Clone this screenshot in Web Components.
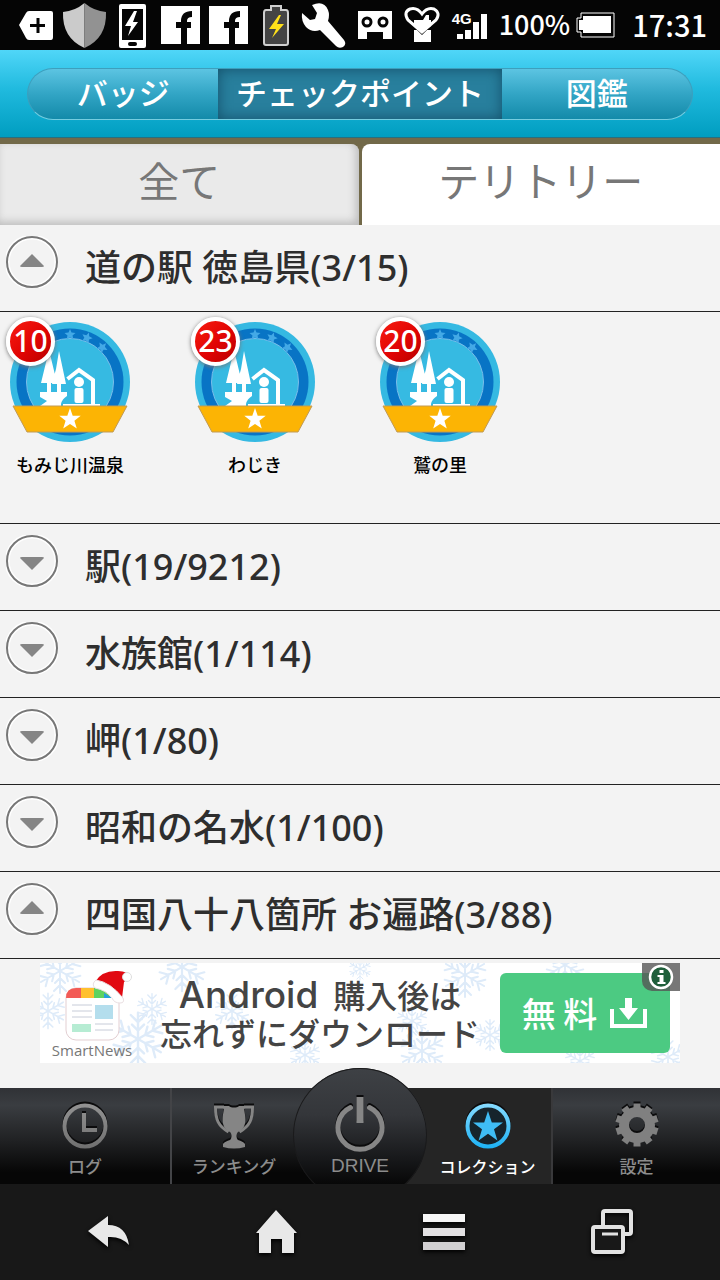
<!DOCTYPE html>
<html lang="ja">
<head>
<meta charset="utf-8">
<meta name="viewport" content="width=device-width, initial-scale=1">
<title>チェックポイント</title>
<style>
  body { margin: 0; background: #f3f3f3; font-family: "Noto Sans CJK JP", "Noto Sans", sans-serif; color: #2e2e2e; }
</style>
</head>
<body>
<app-screen>
  <status-bar slot="top"></status-bar>
  <segment-nav slot="top"></segment-nav>
  <view-tabs slot="top"></view-tabs>

  <list-section open>道の駅 徳島県(3/15)
    <check-badge slot="items" count="10">もみじ川温泉</check-badge>
    <check-badge slot="items" count="23">わじき</check-badge>
    <check-badge slot="items" count="20">鷲の里</check-badge>
  </list-section>
  <list-section>駅(19/9212)</list-section>
  <list-section>水族館(1/114)</list-section>
  <list-section>岬(1/80)</list-section>
  <list-section>昭和の名水(1/100)</list-section>
  <list-section open>四国八十八箇所 お遍路(3/88)</list-section>

  <ad-banner slot="bottom"></ad-banner>
  <tab-bar slot="bottom">
    <tab-item>
      <svg slot="icon" width="48" height="48" viewBox="0 0 48 48" fill="none" stroke="url(#g)" aria-hidden="true">
        <defs><linearGradient id="g" gradientUnits="userSpaceOnUse" x1="0" y1="0" x2="0" y2="48"><stop offset="0" stop-color="#949494"/><stop offset="1" stop-color="#6e6e6e"/></linearGradient></defs>
        <circle cx="24" cy="24" r="20.5" stroke-width="4"/><path d="M23 11v17h13" stroke-width="4"/>
      </svg>ログ
    </tab-item>
    <tab-item>
      <svg slot="icon" width="48" height="48" viewBox="0 0 48 48" fill="#858585" aria-hidden="true">
        <path d="M13 4h6c2 2 8 2 10 0h6v2l-1 1c3 14 1 20-6 23-2 2-2 6 0 8 3 1 6 2 7 4v3q-11 3-22 0v-3c1-2 4-3 7-4 2-2 2-6 0-8-7-3-9-9-6-23l-1-1z"/>
        <path d="M14 5H5.500c0 13 3 19 13 25M34 5h8.500c0 13-3 19-13 25" fill="none" stroke="#858585" stroke-width="3"/>
      </svg>ランキング
    </tab-item>
    <tab-item kind="drive">
      <svg slot="icon" width="52" height="60" viewBox="0 0 52 60" fill="none" stroke="#868686" aria-hidden="true">
        <path d="M16.500 13.500a22 22 0 1 0 19 0" stroke-width="5" stroke-linecap="round"/><path d="M26 3v26" stroke-width="7"/>
      </svg>DRIVE
    </tab-item>
    <tab-item kind="current">
      <svg slot="icon" width="48" height="48" viewBox="0 0 48 48" aria-hidden="true">
        <defs><linearGradient id="b" gradientUnits="userSpaceOnUse" x1="0" y1="0" x2="0" y2="48"><stop offset="0" stop-color="#8adcff"/><stop offset="1" stop-color="#19b1f5"/></linearGradient></defs>
        <circle cx="24" cy="24" r="20.500" fill="#16242c" stroke="url(#b)" stroke-width="4"/>
        <path fill="#3fbdf5" d="M24 9l3.800 11.400h11.200l-9 6.800 3.400 11.300L24 31.700l-9.400 6.800L18 27.200l-9-6.800h11.200z"/>
      </svg>コレクション
    </tab-item>
    <tab-item>
      <svg slot="icon" width="48" height="48" viewBox="0 0 48 48" aria-hidden="true">
        <circle cx="24" cy="23" r="13" fill="none" stroke="#808080" stroke-width="10"/>
        <g id="teeth" fill="none" stroke="#808080" stroke-width="7"><path id="t" d="M24 1.500v6"/><use href="#t" transform="rotate(36 24 23)"/><use href="#t" transform="rotate(72 24 23)"/><use href="#t" transform="rotate(108 24 23)"/><use href="#t" transform="rotate(144 24 23)"/><use href="#t" transform="rotate(180 24 23)"/><use href="#t" transform="rotate(216 24 23)"/><use href="#t" transform="rotate(252 24 23)"/><use href="#t" transform="rotate(288 24 23)"/><use href="#t" transform="rotate(324 24 23)"/></g>
      </svg>設定
    </tab-item>
  </tab-bar>
  <system-nav slot="bottom"></system-nav>
</app-screen>

<script>
const define = (name, html, setup) => {
  const template = document.createElement('template');
  template.innerHTML = html;
  customElements.define(name, class extends HTMLElement {
    constructor() {
      super();
      this.attachShadow({ mode: 'open' }).append(template.content.cloneNode(true));
    }
    connectedCallback() { if (setup) setup(this, this.shadowRoot); }
  });
};

const reset = `*{box-sizing:border-box} button{font:inherit;color:inherit;border:0;padding:0;margin:0;background:none;cursor:pointer} svg{display:block;flex:none}`;

define('app-screen', `
<style>${reset}
  :host { display: flex; flex-direction: column; min-height: 100vh; }
  main { flex: 1; }
</style>
<header><slot name="top"></slot></header>
<main><slot></slot></main>
<footer><slot name="bottom"></slot></footer>`);

define('status-bar', `
<style>${reset}
  :host { display: flex; align-items: center; height: 50px; padding: 0 13px 0 12px; background: #050505; color: #fff; overflow: hidden; }
  .icons { display: flex; }
  .state { display: flex; align-items: center; margin-left: auto; white-space: nowrap; line-height: 48px; }
  .net { display: grid; }
  .net > * { grid-area: 1 / 1; }
  .net span { font-size: 15px; font-weight: 700; line-height: 16px; align-self: start; font-family: "Liberation Sans", sans-serif; }
  .pct { font-size: 27px; font-weight: 500; margin: 0 5px 2px 11px; }
  .time { font-size: 29px; margin: 0 0 2px 17px; font-weight: 500; }
</style>
<div class="icons" aria-hidden="true">
  <svg width="48" height="50"><path d="M7 25l7-12q1-2 3-2h22q2 0 2 2v24q0 3-2 3H17q-2 0-3-2z" fill="#fff"/><path d="M26 18v15M18 25.500h15" stroke="#050505" stroke-width="3"/></svg>
  <svg width="48" height="50"><path d="M24.500 3Q15 11 3 12q-1 26 21.500 36z" fill="#cbcbcb"/><path d="M24.500 3Q34 11 46 12q1 26-21.500 36z" fill="#929292"/></svg>
  <svg width="48" height="50"><rect x="11" y="4" width="27" height="44" rx="2" fill="#fff"/><path d="M14 9h21v31H14z" fill="#050505"/><path d="M26 11l-9 15h6l-3 10 10-14h-5l4-11z" fill="#fff"/><rect x="20" y="42" width="9" height="4" rx="2" fill="#050505"/></svg>
  <svg width="48" height="50"><path d="M5 6h39v38H5z" fill="#fff"/><path d="M28 44V21q0-7 8-7M20 25h15" stroke="#050505" stroke-width="6" fill="none"/></svg>
  <svg width="48" height="50"><path d="M5 6h39v38H5z" fill="#fff"/><path d="M28 44V21q0-7 8-7M20 25h15" stroke="#050505" stroke-width="6" fill="none"/></svg>
  <svg width="48" height="50"><path d="M19 6h10v4h5q2 0 2 3v30q0 2-2 2H14q-2 0-2-2V13q0-3 2-3h5z" fill="#444" stroke="#cfcfcf" stroke-width="2"/><path d="M27 15L17 29h7l-4 9 12-14h-7l4-9z" fill="#ffe11a"/></svg>
  <svg width="48" height="50"><path d="M2 13l8 7 5-1 2-6-5-8Q24 0 28 10q2 5 0 11l16 19q3 4-1 7-4 2-7-1L20 30q-8 3-14-3-5-6-4-14z" fill="#fff"/></svg>
  <svg width="54" height="50"><path d="M10 11h34v28h-9v-7H19v7h-9z" fill="#fff"/><circle cx="19" cy="22" r="4" fill="none" stroke="#050505" stroke-width="3"/><circle cx="35" cy="22" r="4" fill="none" stroke="#050505" stroke-width="3"/></svg>
  <svg width="42" height="50"><path d="M12 30h17v12H12z" fill="#fff"/><path d="M20 35L6 21Q1 13 8 9q7-2 12 5 5-7 12-5 7 4 2 12z" fill="#050505"/><path d="M20 32L6 20Q1 12 8 9q7-2 12 5 5-7 12-5 7 4 2 11z" fill="#050505" stroke="#fff" stroke-width="3"/><path d="M12 20h9l3-5h3v5h2v6l-9 7-8-7z" fill="#fff"/></svg>
</div>
<div class="state">
  <div class="net"><svg width="36" height="28"><path d="M5 23h6v5H5zM13 19h6v9h-6zM21 11h6v17h-6zM29 3h6v25h-6z" fill="#fff"/></svg><span>4G</span></div>
  <span class="pct">100%</span>
  <svg width="40" height="26" aria-hidden="true"><path d="M6 1h33v24H6v-5H2V6h4z" fill="none" stroke="#fff" stroke-width="1"/><path d="M8 4h28v17H8v-3H4V8h4z" fill="#fff"/></svg>
  <span class="time">17:31</span>
</div>`);

define('segment-nav', `
<style>${reset}
  :host { display: block; height: 88px; padding: 18px 27px; background: linear-gradient(#50d6f8, #20bade 45%, #009dc0); border-bottom: 1px solid #276f80; box-sizing: border-box; }
  nav { display: flex; height: 52px; border-radius: 26px; overflow: hidden; border: 1px solid #3d9fbd; border-bottom-color: #75cde0; background: linear-gradient(#5cc4e2, #32a5c5 50%, #138aa9); color: #fff; }
  button { flex: 191 1 0; font-size: 31px; font-weight: 500; line-height: 46px; padding-bottom: 4px; white-space: nowrap; }
  .on { flex-grow: 284; background: #287f9d; box-shadow: inset 0 0 14px #14506a; }
</style>
<nav><button>バッジ</button><button class="on" aria-current="page">チェックポイント</button><button>図鑑</button></nav>`);

define('view-tabs', `
<style>${reset}
  :host { display: block; background: #726949; padding-top: 6px; }
  div { display: flex; gap: 3px; }
  button { flex: 1; height: 81px; font-size: 41px; font-weight: 400; line-height: 70px; padding-bottom: 11px; color: #777; background: #fff; border-radius: 8px 0 0 0; }
  .all { background: #eaeaea; border-radius: 0 8px 0 0; box-shadow: inset -3px -3px 8px #bbb; }
</style>
<div role="tablist"><button class="all" role="tab">全て</button><button role="tab" aria-selected="true">テリトリー</button></div>`);

define('list-section', `
<style>${reset}
  :host { display: block; }
  button { display: flex; align-items: center; gap: 27px; width: 100%; height: 87px; padding: 0 6px; border-bottom: 1px solid #222; text-align: left; font-family: "Noto Sans", "Noto Sans CJK JP", sans-serif; font-size: 36px; font-weight: 500; line-height: 48px; white-space: nowrap; }
  svg { margin-bottom: 12px; }
  .items { display: grid; grid-template-columns: repeat(auto-fill, 140px); gap: 24px 45px; padding: 10px 0 47px; border-bottom: 1px solid #222; }
  .items[hidden] { display: none; }
</style>
<button><svg width="52" height="52" viewBox="0 0 52 52" aria-hidden="true"><circle cx="26" cy="26" r="25" fill="none" stroke="#fff" stroke-width="5"/><circle cx="26" cy="26" r="25" fill="none" stroke="#777" stroke-width="2"/><path fill="#858585"/></svg><span><slot></slot></span></button>
<div class="items"><slot name="items"></slot></div>`, (el, root) => {
  const open = el.hasAttribute('open');
  root.querySelector('button').setAttribute('aria-expanded', open);
  root.querySelector('path').setAttribute('d', open ? 'M26 18l12 12q0 1-2 1H16q-2 0-2-1z' : 'M26 35L14 23q0-1 2-1h20q2 0 2 1z');
  root.querySelector('.items').hidden = !el.querySelector('[slot=items]');
});

define('check-badge', `
<style>${reset}
  :host { display: flex; flex-direction: column; align-items: center; position: relative; color: #000; font-size: 18px; font-weight: 500; line-height: 24px; white-space: nowrap; }
  svg { margin-bottom: 10px; }
  .count { position: absolute; left: 6px; top: -5px; width: 49px; height: 49px; border-radius: 50%; border: 4px solid #fff; background: linear-gradient(135deg, #f71c10, #e00404 55%, #b80000); box-shadow: 0 1px 4px #777; color: #fff; font-family: "Noto Sans", sans-serif; font-size: 30px; line-height: 40px; text-align: center; display: flex; justify-content: center; }
</style>
<svg width="120" height="120" viewBox="0 0 120 120" aria-hidden="true">
  <circle cx="60" cy="60" r="60" fill="#35b9e2"/><circle cx="60" cy="60" r="53.500" fill="#0874c5"/>
  <circle cx="60" cy="60" r="43.500" fill="#36bae2" stroke="#79bdea"/>
  <g fill="#43a9e6"><path id="s" d="M60 7l1.500 3.500 4 .5-3 2.500 1 4-3.500-2-3.500 2 1-4-3-2.500 4-.5z"/><use href="#s" transform="rotate(21 60 60)"/><use href="#s" transform="rotate(43 60 60)"/></g>
  <g fill="#fff"><path d="M39 28l8 33h-6v10h-4V61h-6zM49 29l7 33h-5v9h-4v-9h-5l4-15zM30 70h27v4q-5 3-6 8v2H30l7-5-7-4z"/>
  <circle cx="69" cy="60" r="5"/><rect x="64.500" y="66" width="9" height="15" rx="2"/><path d="M53 82h37v2H53z"/></g>
  <path d="M57.500 57L69 48l14 10v25" fill="none" stroke="#fff" stroke-width="4"/>
  <path d="M3 84h114l-14 26H17z" fill="#fcb404" stroke="#c19a55"/>
  <path fill="#fff" d="M60 86l2.700 7.700h8l-6.300 5 2.400 7.800L60 102l-6.800 4.500 2.400-7.800-6.300-5h8z"/>
</svg>
<span class="count"></span><slot></slot>`, (el, root) => {
  root.querySelector('.count').textContent = el.getAttribute('count');
});

define('ad-banner', `
<style>${reset}
  :host { display: block; padding: 4px 40px 25px; }
  a { display: grid; height: 100px; background: #fff; color: #444; text-decoration: none; position: relative; overflow: hidden; }
  a > * { grid-area: 1 / 1; }
  .snow { width: 100%; height: 100px; }
  .row { display: flex; align-items: center; padding: 0 10px 0 12px; }
  .brand { width: 80px; font-size: 15px; line-height: 18px; color: #777; font-family: "Open Sans", sans-serif; display: flex; flex-direction: column; align-items: center; }
  .copy { flex: 1; display: flex; flex-direction: column; align-items: center; padding: 4px 0 0 8px; line-height: 41px; font-family: "Liberation Sans", "Noto Sans CJK JP", sans-serif; font-size: 32px; font-weight: 500; white-space: nowrap; }
  .copy div { height: 41px; }
  .copy b { font-family: Inter, sans-serif; font-size: 37px; font-weight: 500; line-height: 41px; margin-right: 6px; }
  .cta { display: flex; align-items: center; justify-content: center; gap: 13px; width: 170px; height: 80px; border-radius: 6px; background: #4cca82; color: #fff; font-size: 34px; font-weight: 500; line-height: 48px; white-space: nowrap; }
  .info { justify-self: end; align-self: start; background: #555c; border-radius: 0 0 0 10px; }
</style>
<a href="#ad">
  <svg class="snow" viewBox="0 0 640 100" preserveAspectRatio="none" aria-hidden="true">
    <defs><g id="f" fill="none" stroke-linecap="round"><g id="h"><path d="M0-22V22M-6-20l6 6 6-6M-5-12l5 5 5-5M-6 20l6-6 6 6M-5 12l5-5 5 5"/></g><use href="#h" transform="rotate(60)"/><use href="#h" transform="rotate(120)"/></g></defs>
    <g stroke="#deebf9" stroke-width="2">
      <use href="#f" transform="translate(20 8)"/><use href="#f" transform="translate(142 4) scale(1.100)"/><use href="#f" transform="translate(98 76) scale(1.200)"/>
      <use href="#f" transform="translate(8 48) scale(.8)"/><use href="#f" transform="translate(112 46) scale(.7)"/><use href="#f" transform="translate(192 48) scale(.8)"/>
      <use href="#f" transform="translate(265 92) scale(.7)"/><use href="#f" transform="translate(425 12)"/><use href="#f" transform="translate(382 88)"/>
      <use href="#f" transform="translate(372 58) scale(.7)"/><use href="#f" transform="translate(450 72) scale(.7)"/><use href="#f" transform="translate(525 2) scale(.9)"/>
      <use href="#f" transform="translate(540 98) scale(.7)"/><use href="#f" transform="translate(628 94) scale(.8)"/><use href="#f" transform="translate(320 6) scale(.5)"/>
    </g>
  </svg>
  <div class="row">
    <div class="brand">
      <svg width="80" height="73" viewBox="0 0 80 73" aria-hidden="true">
        <rect x="14" y="20" width="53" height="52" rx="10" fill="#fff" stroke="#e3cfd2"/>
        <path d="M14 30q0-10 10-10h5v10z" fill="#f35b56"/><path d="M29 20h13v10H29z" fill="#ffc02e"/><path d="M42 20h11l6 10H42z" fill="#5fd35f"/><path d="M52 25l8 5h-8z" fill="#28a0dc"/>
        <path d="M20 37h20M20 43h20M20 49h20M43 56h18M43 62h18" stroke="#c7ccd8" stroke-width="1"/><path d="M43 37h18v14H43z" fill="#b4deed"/><path d="M20 56h19v8H20z" fill="#b6ecd3"/>
        <path d="M43 14Q50 2 66 3q10 0 12 6l-6 5-2 16Q63 19 43 14z" fill="#e10a12"/>
        <path d="M44 12q14 2 27 18 2 5-3 5-6 0-8-5-6-8-17-10-4-4 1-8z" fill="#fff" stroke="#eadfe2" stroke-width="1"/>
        <circle cx="75" cy="9" r="4.500" fill="#fff" stroke="#ddd" stroke-width="1"/>
      </svg>SmartNews
    </div>
    <div class="copy"><div><b>Android</b> 購入後は</div><div>忘れずにダウンロード</div></div>
    <div class="cta"><span>無 料</span><svg width="38" height="32" viewBox="0 0 38 32" aria-hidden="true"><path d="M2 12v17h33V12" fill="none" stroke="#fff" stroke-width="4"/><path d="M15 1h7v10h6l-9.500 12L9 11h6z" fill="#fff"/></svg></div>
  </div>
  <svg class="info" width="38" height="28" aria-hidden="true"><circle cx="19" cy="14" r="11" fill="#1f5f3b" stroke="#fff" stroke-width="2.500"/><path d="M17.500 7h4v3h-4zM15.500 12h6v7h2v2h-8v-2h2v-5h-2z" fill="#fff"/></svg>
</a>`);

define('tab-bar', `
<style>${reset}
  :host { display: block; }
  nav { display: grid; grid-template-columns: 172fr 124fr 128fr 127fr 169fr; height: 96px; background: linear-gradient(#303236, #3a3d41 18%, #202123 55%, #060606 88%); }
</style>
<nav><slot></slot></nav>`);

define('tab-item', `
<style>${reset}
  :host { display: block; color: #8c8c8c; min-width: 0; }
  :host(:first-child) { border-right: 2px solid #434447; }
  :host(:last-child) { border-left: 2px solid #39393b; }
  :host([kind=current]) { position: relative; background: #252525; color: #fff; }
  :host([kind=current])::before { content: ""; position: absolute; inset: 0 100% 0 -50px; background: #252525; }
  button { display: flex; flex-direction: column; align-items: center; justify-content: flex-end; width: 100%; height: 96px; font-size: 17px; font-weight: 500; line-height: 24px; padding-bottom: 6px; gap: 4px; white-space: nowrap; position: relative; }
  :host([kind=current]) button { font-size: 16px; }
  :host([kind=drive]) { position: relative; z-index: 1; height: 116px; margin-top: -20px; margin-inline: -4px; }
  :host([kind=drive]) button { height: 116px; font-family: "Liberation Sans", sans-serif; font-size: 19px; font-weight: 400; gap: 0; }
  .disc { display: none; }
  :host([kind=drive]) .disc { display: block; position: absolute; inset: 0; overflow: hidden; }
  .disc::before { content: ""; display: block; height: 134px; width: 134px; margin: 0 auto; border-radius: 50%; background: linear-gradient(#3e4145, #34363a 35%, #17181a 68%, #060606 88%); box-shadow: inset 0 0 0 1px #1a1a1b; }
  ::slotted(svg) { display: block; filter: drop-shadow(0 -2px 0 #0b0b0c); }
</style>
<div class="disc"></div>
<button><slot name="icon"></slot><span><slot></slot></span></button>`);

define('system-nav', `
<style>${reset}
  :host { display: block; background: #181818; }
  nav { display: flex; justify-content: space-between; align-items: center; height: 96px; padding: 0 84px; }
  svg { filter: drop-shadow(0 2px 2px #000); }
</style>
<nav>
  <button aria-label="戻る"><svg width="48" height="48"><path d="M4 23L24 8v9q18 0 21 20-8-9-21-8v10z" fill="#e8e8e8"/></svg></button>
  <button aria-label="ホーム"><svg width="48" height="48"><path d="M24 2L4 25h3v20h12V31h11v14h12V25h3z" fill="#e8e8e8"/></svg></button>
  <button aria-label="メニュー"><svg width="48" height="48"><path d="M3 6h42v8H3z" fill="#f6f6f6"/><path d="M3 20h42v8H3z" fill="#e2e0e2"/><path d="M3 34h42v8H3z" fill="#d2d0d2"/></svg></button>
  <button aria-label="最近使ったアプリ"><svg width="48" height="48" fill="none" stroke="#e2e2e2" stroke-width="4"><rect x="15" y="3" width="28" height="23" rx="2"/><rect x="5" y="19" width="30" height="25" rx="2" fill="#181818"/><path d="M14 26h16" stroke-width="3"/></svg></button>
</nav>`);
</script>
</body>
</html>
